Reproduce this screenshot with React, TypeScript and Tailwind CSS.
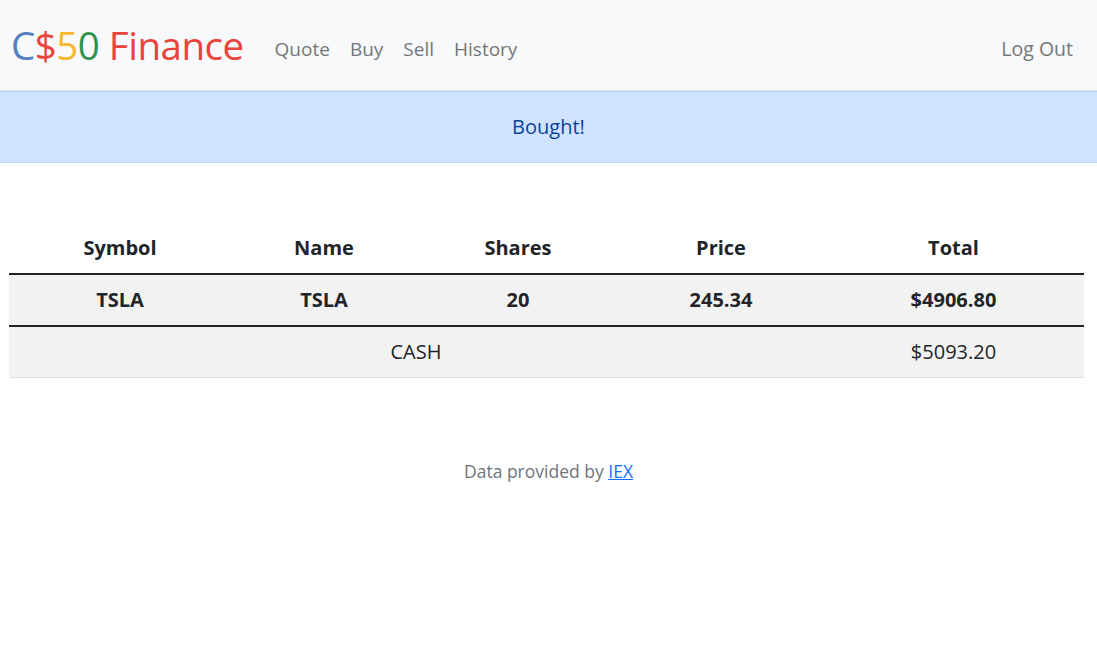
export default function App() {
    const font = { fontFamily: '"Open Sans", "Noto Sans", sans-serif' }

    return <div style={font} className="min-h-[662px] bg-white text-[#212529]">
        <nav className="h-[91px] bg-[#f8f9fa] border-b border-[#dee2e6] flex items-center pl-[11px] pr-[24px]">
            <a href="/" className="text-[38.5px] leading-none tracking-[-0.5px] mr-[31px] mt-[1px]">
                <span className="text-[#537fbe]">C</span>
                <span className="text-[#ea433b]">$</span>
                <span className="text-[#f5b82e]">5</span>
                <span className="text-[#2e944b]">0</span>
                <span className="text-[#ea433b]"> Finance</span>
            </a>
            <ul className="flex gap-[20px] text-[19px] text-[#757678] mt-[8px]">
                <li><a href="/quote">Quote</a></li>
                <li><a href="/buy">Buy</a></li>
                <li><a href="/sell">Sell</a></li>
                <li><a href="/history">History</a></li>
            </ul>
            <div className="ml-auto text-[19.5px] text-[#757678] mt-[8px]">
                <a href="/logout">Log Out</a>
            </div>
        </nav>

        <div className="bg-[#cfe2ff] border-y border-[#b6d4fe] text-[#084298] text-center text-[20px] leading-[30px] py-[20px]">
            Bought!
        </div>

        <main className="pt-[60px] pb-[60px] pl-[9px] pr-[13px]">
            <table className="w-full text-center text-[20px] leading-[30px] border-collapse">
                <colgroup>
                    <col className="w-[222px]" />
                    <col className="w-[186px]" />
                    <col className="w-[202px]" />
                    <col className="w-[204px]" />
                    <col className="w-[261px]" />
                </colgroup>
                <thead>
                    <tr className="border-b-2 border-[#212529]">
                        <th className="py-[10px] font-bold">Symbol</th>
                        <th className="py-[10px] font-bold">Name</th>
                        <th className="py-[10px] font-bold">Shares</th>
                        <th className="py-[10px] font-bold">Price</th>
                        <th className="py-[10px] font-bold">Total</th>
                    </tr>
                </thead>
                <tbody>
                    <tr className="bg-[#f2f2f2] font-bold border-b-2 border-[#212529]">
                        <td className="py-[10px]">TSLA</td>
                        <td className="py-[10px]">TSLA</td>
                        <td className="py-[10px]">20</td>
                        <td className="py-[10px]">245.34</td>
                        <td className="py-[10px]">$4906.80</td>
                    </tr>
                </tbody>
                <tfoot>
                    <tr className="bg-[#f2f2f2] border-b border-[#dee2e6]">
                        <td colSpan={4} className="py-[10px]">CASH</td>
                        <td className="py-[10px]">$5093.20</td>
                    </tr>
                </tfoot>
            </table>
        </main>

        <footer className="text-center text-[17.5px] text-[#6c757d] pt-[20px]">
            Data provided by <a href="https://iexcloud.io/" className="text-[#0d6efd] underline">IEX</a>
        </footer>
    </div>
}
